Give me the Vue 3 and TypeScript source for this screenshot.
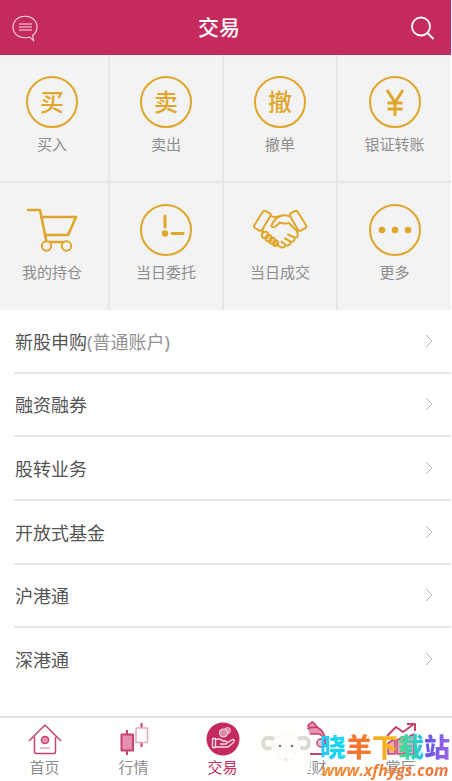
<script setup lang="ts">
type Action = { name: string; icon: string; glyph?: string }
type Row = { name: string; note?: string }
type Tab = { name: string; icon: string; active?: boolean }

const actions: Action[] = [
  { name: '买入', icon: 'glyph', glyph: '买' },
  { name: '卖出', icon: 'glyph', glyph: '卖' },
  { name: '撤单', icon: 'glyph', glyph: '撤' },
  { name: '银证转账', icon: 'yen' },
  { name: '我的持仓', icon: 'cart' },
  { name: '当日委托', icon: 'clock' },
  { name: '当日成交', icon: 'shake' },
  { name: '更多', icon: 'more' },
]
const rows: Row[] = [
  { name: '新股申购', note: '(普通账户)' },
  { name: '融资融券' },
  { name: '股转业务' },
  { name: '开放式基金' },
  { name: '沪港通' },
  { name: '深港通' },
]
const tabs: Tab[] = [
  { name: '首页', icon: 'home' },
  { name: '行情', icon: 'candles' },
  { name: '交易', icon: 'trade', active: true },
  { name: '理财', icon: 'wealth' },
  { name: '掌厅', icon: 'hall' },
]
</script>

<template>
  <div class="page">
    <header class="bar">
      <button class="icon-btn" type="button" aria-label="消息">
        <svg width="26" height="26" viewBox="0 0 26 26" fill="none" stroke="#fbdde8" stroke-width="1.1">
          <path d="M17.5 21.8C16 22.6 14.600 22.700 13 22.700C6 22.700 1 18 1 12C1 6 6 1.200 13 1.200C20 1.200 25 6 25 12C25 15.300 23.300 18.500 20.800 20.300L21.300 25.400L17.500 21.800" />
          <path d="M7 9H20M7 12H20M7 15H20" />
        </svg>
      </button>
      <h1>交易</h1>
      <button class="icon-btn" type="button" aria-label="搜索">
        <svg width="24" height="24" viewBox="0 0 24 24" fill="none" stroke="#fff" stroke-width="1.8">
          <circle cx="11" cy="10.500" r="9" />
          <path d="M17 16.500L23.500 23" />
        </svg>
      </button>
    </header>

    <nav class="actions" aria-label="交易功能">
      <button v-for="a in actions" :key="a.name" class="action" type="button">
        <span v-if="a.glyph" class="ring">{{ a.glyph }}</span>
        <svg v-else class="pic" viewBox="0 0 52 52" fill="none" stroke="#dfa62b" stroke-width="2" stroke-linecap="round" stroke-linejoin="round">
          <template v-if="a.icon === 'yen'">
            <circle cx="26" cy="26" r="25" />
            <path stroke-width="3" stroke-linecap="butt" d="M18 14L26 26.500L34 14M26 26V40M18.500 27H33.500M18.500 33H33.500" />
          </template>
          <template v-else-if="a.icon === 'cart'">
            <path stroke-width="2.600" d="M2 6H14L20.500 38H41M16 13H50L42 31H19" />
            <circle cx="20.500" cy="42" r="4.700" fill="#f3f3f3" />
            <circle cx="40.500" cy="42" r="4.700" fill="#f3f3f3" />
          </template>
          <template v-else-if="a.icon === 'clock'">
            <circle cx="26" cy="26" r="25" />
            <circle cx="25" cy="29.500" r="3.200" fill="#dfa62b" stroke="none" />
            <path stroke-width="3" d="M25 12V23M32 29.500H43" />
          </template>
          <template v-else-if="a.icon === 'shake'">
            <path d="M11.500 7L16 9.300Q17.200 10.200 16.500 11.700L8 26Q6.900 27.500 5.400 26.600L1 24Q-.7 23 .3 21.300L8.500 8.200Q9.700 6.200 11.500 7ZM41 7L36.500 9.300Q35.300 10.200 36 11.700L44 26Q45 27.500 46.500 26.600L51.500 24Q53 23 52 21.300L44 8.200Q42.800 6.200 41 7Z" />
            <path d="M16.500 12Q22 14 27 11.700Q32 10.300 35.500 12.500M27 11.700Q20.500 14 17.300 21.800Q18 24.500 21.500 22.500L26 18.500Q31 20.500 34.500 18.800L43 27L43.500 29Q45 34 40.500 33.500Q41 38.500 36.500 37.500Q36.500 42.500 32 41.200Q29 45.500 24.500 41.700L22.500 39.700M42.500 25.500L44 26M8.500 26L9.500 29M34 30.500L40.500 33.500M31 34.500L36.500 37.500M27.500 37.500L32 41.200" />
            <rect x="7.800" y="27.800" width="6.400" height="6.400" rx="3" />
            <rect x="11.700" y="31" width="6" height="6.500" rx="3" />
            <rect x="15.500" y="33.800" width="5.800" height="6.200" rx="2.900" />
            <rect x="19.200" y="36.500" width="5" height="5.600" rx="2.500" />
          </template>
          <template v-else>
            <circle cx="26" cy="26" r="25" />
            <g fill="#dfa62b" stroke="none">
              <circle cx="13" cy="26" r="3.300" />
              <circle cx="26" cy="26" r="3.300" />
              <circle cx="39" cy="26" r="3.300" />
            </g>
          </template>
        </svg>
        <span class="label">{{ a.name }}</span>
      </button>
    </nav>

    <ul class="list">
      <li v-for="r in rows" :key="r.name">
        <a href="#">
          <span>{{ r.name }}<span v-if="r.note" class="note">{{ r.note }}</span></span>
          <svg width="8" height="14" viewBox="0 0 8 14" fill="none" stroke="#b5b5b5"><path d="M1 1L7 7L1 13" /></svg>
        </a>
      </li>
    </ul>

    <footer class="foot">
      <nav class="tabs" aria-label="主导航">
        <a v-for="t in tabs" :key="t.name" href="#" class="tab" :class="{ active: t.active }">
          <svg width="34" height="34" viewBox="0 0 34 34" fill="none" stroke="#c5436f" stroke-width="1.500" stroke-linejoin="round">
            <template v-if="t.icon === 'home'">
              <path d="M1 18L17 2L33 18M6.500 14V29Q6.500 30.500 8 30.500H26Q27.500 30.500 27.500 29V14" />
              <circle cx="17" cy="17" r="3.600" fill="#e795b2" />
              <path d="M12 25H22" stroke="#e7a7be" />
            </template>
            <template v-else-if="t.icon === 'candles'">
              <path d="M10 7V32" stroke-width="2" />
              <rect x="4.500" y="11.500" width="11.500" height="16" fill="#e98eb0" stroke-width="2" />
              <path d="M24.500 0V24" stroke-width="2" />
              <rect x="19" y="5" width="11.500" height="14.500" fill="#fff" stroke="#e8a9bf" />
            </template>
            <template v-else-if="t.icon === 'trade'">
              <circle cx="17" cy="16" r="16.500" fill="#c52a5d" stroke="none" />
              <circle cx="21.500" cy="7.500" r="3" fill="#df85a5" stroke="#f3c1d1" stroke-width="1" />
              <circle cx="17.500" cy="10" r="4" fill="#df85a5" stroke="#f9dce6" stroke-width="1.200" />
              <path d="M6.500 15.500H9.500V24.500H6.500ZM9.500 16.500Q14 15 17 18H20Q22 20 20 21H14M21 20L26.500 16.500Q29.500 16.500 27.500 19.500L22 24H9.500" stroke="#fbe5ed" stroke-width="1.300" />
            </template>
            <template v-else-if="t.icon === 'wealth'">
              <path d="M13 2L17 -1Q19 -1 22 4L17 6Q13 5 13 2Z" fill="#e990b0" />
              <path d="M22 4Q29 8 30 15L24 11H12L6 15Q8 8 14 5Z" fill="#e990b0" />
              <path d="M30 15V22M6 15L4 31H29" stroke-width="2" />
              <circle cx="26" cy="20" r="4" fill="#f3bfd0" />
            </template>
            <template v-else>
              <path d="M3 13L12 4L19 9L30 1M23 1H31V8" stroke-width="2" />
              <path d="M4 20L11 16V31H4ZM13 17L20 14V31H13ZM22 15L30 11V31H22Z" fill="#eda8c0" />
            </template>
          </svg>
          <span>{{ t.name }}</span>
        </a>
      </nav>

      <div class="mark">
        <svg class="sheep" width="60" height="56" viewBox="0 0 60 56" fill="none">
          <rect width="54" height="56" rx="14" fill="#fffffb" />
          <path d="M18 16Q7 12 7 21Q9 27 14 25M42 16Q53 12 53 21Q51 27 46 25" stroke="#dedad1" stroke-width="4" stroke-linecap="round" />
          <path d="M17 20Q18 12 25 13Q30 9 35 13Q42 12 43 20Q42 29 37 34L33 39Q30 41 27 39L23 34Q18 29 17 20Z" fill="#fffefb" stroke="#f7f5f0" />
          <circle cx="24" cy="23" r="1.300" fill="#777" />
          <circle cx="36" cy="23" r="1.300" fill="#777" />
          <path d="M28 35L30 37L32 35M30 37V39" stroke="#e4d8d4" />
        </svg>
        <div class="words">
          <strong><span class="c1">晓</span><span class="c2">羊</span><span class="c3">下</span><span class="c4">载</span><span class="c5">站</span></strong>
          <em>www.xfhygs.com</em>
        </div>
      </div>
    </footer>
  </div>
</template>

<style>
body {
  margin: 0;
  background: #fff;
}
</style>

<style scoped>
.page {
  min-height: 100vh;
  display: flex;
  flex-direction: column;
  font-family: "Noto Sans", "Noto Sans CJK SC", sans-serif;
  color: #555;
}
button {
  border: 0;
  margin: 0;
  padding: 0;
  background: none;
  font: inherit;
  color: inherit;
}
a {
  color: inherit;
  text-decoration: none;
}
svg {
  display: block;
  overflow: visible;
}
.bar {
  height: 55px;
  margin-right: 1px;
  padding: 0 17px 0 12px;
  box-sizing: border-box;
  display: grid;
  grid-template-columns: 1fr auto 1fr;
  align-items: center;
  background: #c52a5d;
}
.bar h1 {
  margin: 0;
  padding: 0 8px 2px 0;
  font-size: 21px;
  line-height: 30px;
  font-weight: 500;
  color: #fff;
}
.icon-btn:last-child {
  justify-self: end;
}
.icon-btn {
  justify-self: start;
}
.actions {
  margin-right: 1px;
  display: grid;
  grid-template-columns: 110fr 114fr 114fr 113fr;
  background: #f3f3f3;
}
.action {
  box-sizing: border-box;
  height: 128px;
  padding-top: 21px;
  border-right: 2px solid #e6e6e6;
  border-bottom: 2px solid #e6e6e6;
  display: flex;
  flex-direction: column;
  align-items: center;
  gap: 6px;
}
.action:nth-child(4n + 1) {
  padding-right: 4px;
}
.action:nth-child(4n) {
  border-right: 0;
}
.action:nth-child(n + 5) {
  height: 127px;
  border-bottom: 0;
}
.ring {
  box-sizing: border-box;
  width: 52px;
  height: 52px;
  border: 2px solid #dfa62b;
  border-radius: 50%;
  font-size: 24px;
  line-height: 48px;
  font-weight: 500;
  text-align: center;
  color: #dfa62b;
}
.pic {
  width: 52px;
  height: 52px;
}
.label {
  font-size: 15px;
  line-height: 20px;
  color: #8d8d8d;
}
.list {
  list-style: none;
  margin: 0;
  padding: 0 1px 0 14px;
  min-height: 382px;
  display: grid;
  grid-auto-rows: 1fr;
}
.list li {
  display: grid;
  border-bottom: 2px solid #e6e6e6;
}
.list li:last-child {
  border-bottom-color: transparent;
}
.list a {
  padding: 0 18px 0 1px;
  display: flex;
  align-items: center;
  justify-content: space-between;
  font-size: 18px;
}
.note {
  color: #929292;
}
.foot {
  position: relative;
  margin-top: auto;
  border-top: 2px solid #e2e2e2;
}
.tabs {
  height: 63px;
  padding-right: 7px;
  display: grid;
  grid-template-columns: repeat(5, 1fr);
}
.tab {
  padding-top: 5px;
  display: flex;
  flex-direction: column;
  align-items: center;
  font-size: 15px;
  line-height: 20px;
  color: #8d8d8d;
}
.tab.active {
  color: #c52a5d;
}
.mark {
  position: absolute;
  right: 2px;
  top: 5px;
  display: flex;
  gap: 4px;
}
.words {
  display: flex;
  flex-direction: column;
  align-items: center;
  padding-top: 9px;
}
.words strong {
  font-size: 26px;
  line-height: 28px;
  font-weight: 900;
  font-family: "Noto Sans CJK SC", sans-serif;
}
.words strong span,
.words em {
  background-clip: text;
  -webkit-background-clip: text;
  color: transparent;
}
.words em {
  font-family: "Open Sans", sans-serif;
  font-size: 16px;
  line-height: 20px;
  font-weight: 700;
  background-image: linear-gradient(90deg, #f58a2c, #ee7440);
}
.c1 { background-image: linear-gradient(90deg, #22c7f2, #18dcf5); }
.c2 { background-image: linear-gradient(90deg, #f5703a, #f77e28); }
.c3 { background-image: linear-gradient(90deg, #f6a81f, #f9bb25); }
.c4 { background-image: linear-gradient(90deg, #4ddf86, #22c4e6); }
.c5 { background-image: linear-gradient(90deg, #5b55e8, #a263e6); }
</style>
